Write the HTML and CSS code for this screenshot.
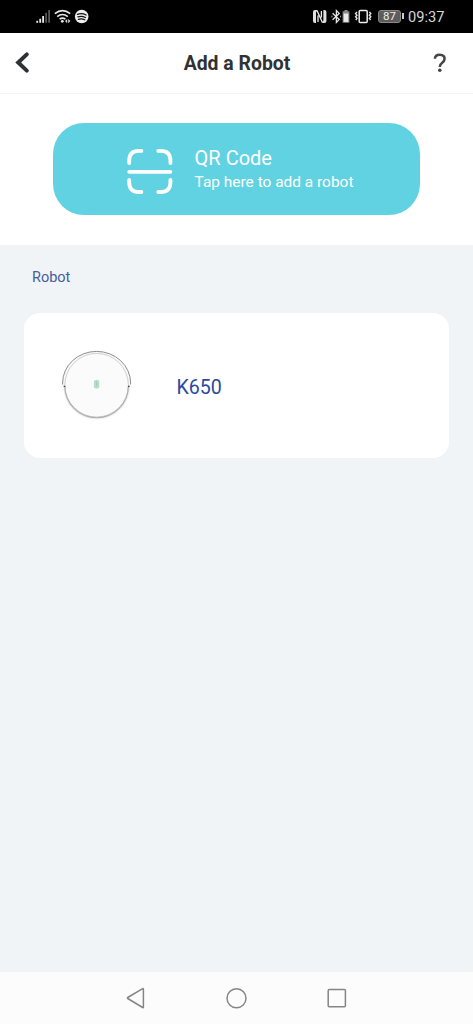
FILE: index.html
```html
<!DOCTYPE html>
<html lang="en">
<head>
<meta charset="utf-8">
<title>Add a Robot</title>
<link rel="stylesheet" href="styles.css">
</head>
<body>
<div class="screen">
  <div class="status">
    <svg class="status-left" width="54" height="17" viewBox="36 8 54 17">
      <g fill="#e8e8e8"><rect x="36.3" y="20.8" width="1.8" height="2"/><rect x="39.3" y="18.8" width="1.8" height="4"/><rect x="42.2" y="16" width="1.8" height="6.8"/></g>
      <g fill="#555"><rect x="45.2" y="12.8" width="1.8" height="10"/><rect x="48.2" y="10" width="1.8" height="12.8"/></g>
      <g fill="none" stroke="#e8e8e8" stroke-width="1.6"><path d="M54.8 13.6Q62.5 7.6 70.2 13.6M57.2 16.6Q62.5 12.4 67.8 16.6M59.6 19.2Q62.5 17 65.4 19.2"/></g>
      <circle cx="62.3" cy="21.3" r="1.4" fill="#e8e8e8"/>
      <path d="M67.2 19L65 21.1L67.2 23.2ZM68.2 19L70.4 21.1L68.2 23.2Z" fill="#d8d8d8"/>
      <circle cx="81.7" cy="16.5" r="6.8" fill="#eee"/>
      <path d="M77.4 14.3Q82 12.7 86.1 15M77.9 16.9Q82 15.6 85.4 17.5M78.4 19.3Q82 18.2 84.7 19.8" fill="none" stroke="#111" stroke-width="1.3" stroke-linecap="round"/>
    </svg>
    <div class="status-right">
      <svg width="60" height="17" viewBox="312 8 60 17">
        <path d="M317.4 10H315Q313 10 313 12V21Q313 23 315 23H316V12.6ZM322 23H324.4Q326.4 23 326.4 21V12Q326.4 10 324.4 10H323.4V20.4Z" fill="#e0e0e0"/>
        <path d="M317 10.4L322.4 22.6M318 15.5V22M321.4 11V17.5" fill="none" stroke="#ececec" stroke-width="1.3"/>
        <path d="M332.6 13.2L339.2 19.6L336.4 22.4V10.6L339.2 13.4L332.6 19.8" fill="none" stroke="#e4e4e4" stroke-width="1.3"/>
        <path d="M331.9 15.7V17.3M340.6 15.7V17.3" stroke="#aaa"/>
        <path d="M344.4 10H347.6V11.3H349.4V22.8H342.6V11.3H344.4Z" fill="#888"/>
        <rect x="343.7" y="13.5" width="4.6" height="8.4" fill="#e8e8e8"/>
        <rect x="359.2" y="10.4" width="8" height="12.2" rx="1" fill="none" stroke="#ececec" stroke-width="1.5"/>
        <path d="M357 12L355.6 13.6L357 15.2L355.6 16.8L357 18.4L355.8 20M369.4 12L370.8 13.6L369.4 15.2L370.8 16.8L369.4 18.4L370.6 20" fill="none" stroke="#e4e4e4" stroke-width="1.4"/>
      </svg>
      <div class="battery">87</div>
      <div class="battery-tip"></div>
      <div class="clock">09:37</div>
    </div>
  </div>
  <div class="header">
    <svg width="16" height="24" viewBox="14 51 16 24"><path d="M26.8 54.4L18.2 62.5L26.8 70.6" fill="none" stroke="#303133" stroke-width="4" stroke-linecap="round" stroke-linejoin="miter"/></svg>
    <h1 class="title">Add a Robot</h1>
    <svg width="16" height="24" viewBox="432 51 16 24"><path d="M434.9 58.8Q435 54.8 439.8 54.8Q444.6 54.9 444.6 58.9Q444.5 61 442.2 62.7Q439.8 64.4 439.8 67" fill="none" stroke="#454547" stroke-width="2.5"/><circle cx="439.8" cy="70.3" r="1.8" fill="#454547"/></svg>
  </div>
  <div class="scan-area">
    <div class="scan-button">
      <svg width="47" height="48" viewBox="126 147 47 48"><path d="M129.2 163V160.5Q129.2 150.9 138.8 150.9H141.4M158.3 150.9H160.7Q170.4 150.9 170.4 160.5V163M170.4 180V182.2Q170.4 192 160.7 192H158.3M141.4 192H138.8Q129.2 192 129.2 182.2V180M129.2 171.8H170.4" fill="none" stroke="#fff" stroke-width="3.8" stroke-linecap="round"/></svg>
      <div class="scan-text">
        <div class="scan-title">QR Code</div>
        <div class="scan-sub">Tap here to add a robot</div>
      </div>
    </div>
  </div>
  <div class="list">
    <div class="section">Robot</div>
    <div class="card">
      <svg width="76" height="76" viewBox="59 347 76 76">
        <circle cx="96.6" cy="386" r="32" fill="none" stroke="#f0f0f0" stroke-width="3"/>
        <path d="M62.6 384.5V383A34 31.6 0 0 1 130.6 383V384.5" fill="#fafafa" stroke="#8c8c8c"/>
        <circle cx="96.6" cy="385.2" r="31.8" fill="#fbfbfb" stroke="#cfcfcf"/>
        <path d="M64.8 386A31.8 31.8 0 0 0 128.4 386" fill="none" stroke="#acacac" stroke-width="1.1"/>
        <path d="M63.7 386.4H65.3M128 386.4H129.6" stroke="#444" stroke-width="1.3"/>
        <rect x="93.9" y="379.8" width="5.4" height="8.8" rx="2.7" fill="#b3dfc9"/>
        <path d="M96.6 382V386" stroke="#9ccfb5"/>
      </svg>
      <div class="model">K650</div>
    </div>
  </div>
  <div class="nav">
    <svg width="22" height="22" viewBox="125 987 22 22"><path d="M143.4 989Q143.4 988.3 142.7 988.7L127.7 997.5Q127 998 127.7 998.5L142.7 1007.5Q143.4 1007.9 143.4 1007.2Z" fill="none" stroke="#858585" stroke-width="1.5"/></svg>
    <svg width="22" height="22" viewBox="225.8 987 22 22"><circle cx="236.3" cy="998.2" r="9.5" fill="none" stroke="#858585" stroke-width="1.5"/></svg>
    <svg width="22" height="22" viewBox="326 987 22 22"><rect x="328.2" y="989.6" width="17.2" height="17.2" rx="1" fill="none" stroke="#858585" stroke-width="1.5"/></svg>
  </div>
</div>
</body>
</html>
```
FILE: styles.css
```css
* { box-sizing: border-box; }
body { margin: 0; font-family: Roboto, "Liberation Sans", sans-serif; }
svg { display: block; flex: none; }
.screen { width: 473px; height: 1024px; display: flex; flex-direction: column; background: #fff; overflow: hidden; }
.status { height: 33px; background: #000; display: flex; justify-content: space-between; padding: 8px 28px 0 36px; }
.status-right { display: flex; }
.battery { width: 23px; height: 13px; margin: 2px 0 0 6px; border: 1px solid #888; border-radius: 3px; background: #5c5c5c; color: #eee; font-size: 11.5px; line-height: 11px; text-align: center; }
.battery-tip { width: 2px; height: 6px; margin: 5px 4px 0 1px; background: #ccc; }
.clock { width: 37px; font-size: 14.6px; line-height: 18px; color: #d8d8d8; white-space: nowrap; }
.header { height: 61px; padding: 0 25px 0 14px; border-bottom: 1px solid #f5f5f5; display: flex; align-items: center; justify-content: space-between; }
.title { margin: 2px 0 0 12px; font-size: 19.4px; line-height: 24px; font-weight: 700; color: #303133; white-space: nowrap; }
.scan-area { height: 151px; padding: 29px 53px 0; }
.scan-button { width: 367px; height: 92px; border-radius: 31px; background: #61d2e1; display: flex; align-items: flex-start; gap: 21.6px; padding: 24px 0 0 73px; color: #fff; white-space: nowrap; }
.scan-title { margin-top: -1px; font-size: 20px; line-height: 24px; }
.scan-sub { margin-top: 1px; font-size: 15.45px; line-height: 22px; }
.list { flex: 1; background: #f0f4f7; padding: 23px 24px 0; }
.section { margin-left: 8px; font-size: 14.5px; line-height: 20px; color: #455d9c; }
.card { height: 145px; margin-top: 25px; padding: 34px 0 0 35px; border-radius: 16px; background: #fff; display: flex; gap: 41.5px; }
.model { margin-top: 29px; font-size: 19.6px; line-height: 24px; color: #2b4a9d; }
.nav { height: 52px; background: #fcfcfc; display: flex; gap: 78.5px; padding: 15px 0 0 125px; }
```
